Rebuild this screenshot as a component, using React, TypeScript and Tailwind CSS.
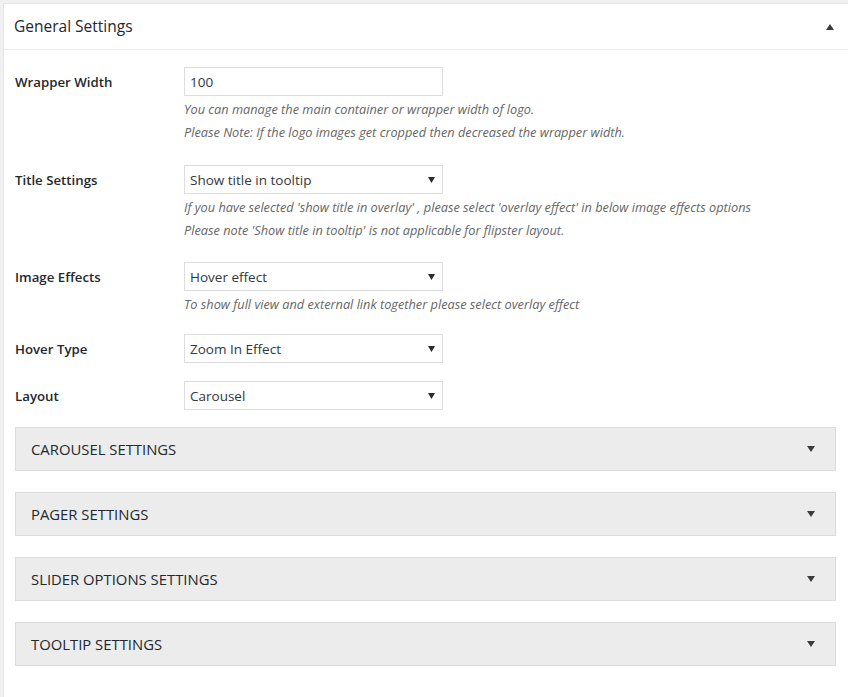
import React from "react";

const font = { fontFamily: '"Open Sans", "Noto Sans", Arial, sans-serif' };

function Caret({ up = false, className = "" }: { up?: boolean; className?: string }) {
  return (
    <svg width="8" height="6" viewBox="0 0 8 6" className={className}>
      {up ? <polygon points="0,6 8,6 4,0" fill="#3c3c3c" /> : <polygon points="0,0 8,0 4,6" fill="#3c3c3c" />}
    </svg>
  );
}

function SelectBox({ value }: { value: string }) {
  return (
    <div className="flex h-[29px] w-[259px] items-center justify-between border border-[#dddddd] bg-white pl-[5px] pr-[7px] text-[13.5px] text-[#32373c]">
      <span className="pt-[2px]">{value}</span>
      <svg width="7" height="6" viewBox="0 0 7 6">
        <polygon points="0,0 7,0 3.5,6" fill="#2b2b2b" />
      </svg>
    </div>
  );
}

function Row({
  label,
  children,
  desc = [],
  className = "",
}: {
  label: string;
  children: React.ReactNode;
  desc?: string[];
  className?: string;
}) {
  return (
    <div className={`flex ${className}`}>
      <div className="h-[29px] w-[169px] shrink-0 translate-y-[1px] text-[13.25px] font-semibold leading-[29px] text-[#23282d]">
        {label}
      </div>
      <div className="flex flex-col">
        {children}
        {desc.length > 0 && (
          <div className="mt-[2px] flex flex-col">
            {desc.map((d) => (
              <div key={d} className="text-[12.75px] italic leading-[23px] text-[#666666]">
                {d}
              </div>
            ))}
          </div>
        )}
      </div>
    </div>
  );
}

function Accordion({ title, className = "" }: { title: string; className?: string }) {
  return (
    <div
      className={`flex h-[44px] w-[821px] items-center justify-between border border-[#dcdcdc] bg-[#ececec] pl-[15px] pr-[20px] text-[14.85px] text-[#23282d] ${className}`}
    >
      <span>{title}</span>
      <Caret />
    </div>
  );
}

export default function App() {
  return (
    <div className="h-[697px] w-[848px] overflow-hidden bg-[#f1f1f1] pl-[3px] pt-[3px]" style={font}>
      <div className="h-[720px] w-[850px] border border-[#e5e5e5] bg-white">
        <div className="flex h-[46px] items-center justify-between border-b border-[#eeeeee] pl-[10px] pr-[18px]">
          <span className="text-[15.5px] text-[#23282d]">General Settings</span>
          <Caret up />
        </div>
        <div className="flex flex-col pl-[11px] pt-[17px]">
          <Row
            label="Wrapper Width"
            desc={[
              "You can manage the main container or wrapper width of logo.",
              "Please Note: If the logo images get cropped then decreased the wrapper width.",
            ]}
          >
            <div className="flex h-[29px] w-[259px] items-center border border-[#dddddd] bg-white pl-[5px] pt-[2px] text-[13.5px] text-[#32373c]">
              100
            </div>
          </Row>
          <Row
            className="mt-[21px]"
            label="Title Settings"
            desc={[
              "If you have selected 'show title in overlay' , please select 'overlay effect' in below image effects options",
              "Please note 'Show title in tooltip' is not applicable for flipster layout.",
            ]}
          >
            <SelectBox value="Show title in tooltip" />
          </Row>
          <Row
            className="mt-[20px]"
            label="Image Effects"
            desc={["To show full view and external link together please select overlay effect"]}
          >
            <SelectBox value="Hover effect" />
          </Row>
          <Row className="mt-[18px]" label="Hover Type">
            <SelectBox value="Zoom In Effect" />
          </Row>
          <Row className="mt-[18px]" label="Layout">
            <SelectBox value="Carousel" />
          </Row>
          <div className="mt-[17px] flex flex-col gap-[21px]">
            <Accordion title="CAROUSEL SETTINGS" />
            <Accordion title="PAGER SETTINGS" />
            <Accordion title="SLIDER OPTIONS SETTINGS" />
            <Accordion title="TOOLTIP SETTINGS" />
          </div>
        </div>
      </div>
    </div>
  );
}
